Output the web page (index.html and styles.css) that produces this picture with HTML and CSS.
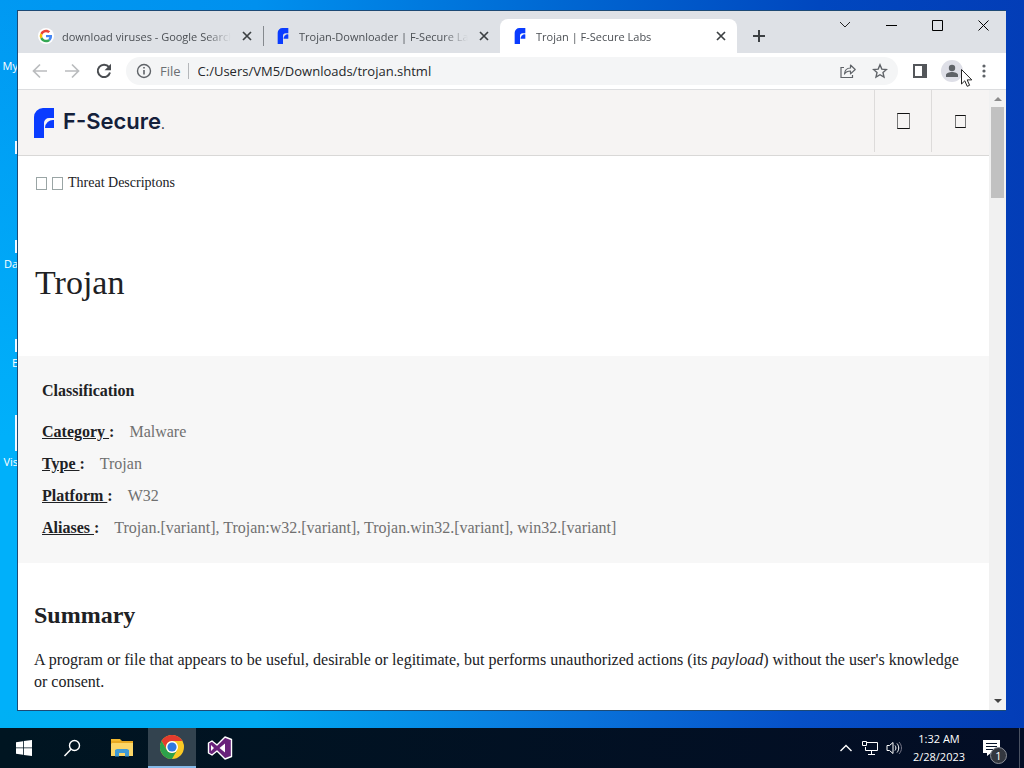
FILE: index.html
```html
<!DOCTYPE html>
<html lang="en">
<head>
  <meta charset="UTF-8">
  <meta name="viewport" content="width=device-width, initial-scale=1.0">
  <title>Trojan | F-Secure Labs</title>
  <link rel="stylesheet" href="styles.css">
</head>
<body>
<svg class="defs" aria-hidden="true">
  <symbol id="fsecure" viewBox="0 0 20 30">
    <path fill="#0a3cff" d="M9 0h11v10h-5a5 5 0 0 0-5 5v15H0V9a9 9 0 0 1 9-9z"/>
    <path fill="#0a3cff" d="M20 12v8h-9a8 8 0 0 1 9-8z"/>
  </symbol>
  <symbol id="close" viewBox="0 0 10 10">
    <path d="M1 1l8 8M9 1L1 9" fill="none" stroke="#3c4043" stroke-width="1.7"/>
  </symbol>
</svg>

<main class="desktop">
  <div class="shortcut my"><span>My</span></div>
  <div class="shortcut chrome"><i></i></div>
  <div class="shortcut data"><i></i><span>Da</span></div>
  <div class="shortcut exe"><i></i><span>E</span></div>
  <div class="shortcut visual"><i></i><span>Vis</span></div>

  <section class="window">
    <div class="tabstrip">
      <div class="tabs">
        <div class="tab">
          <svg class="favicon" viewBox="0 0 48 48">
            <circle cx="24" cy="24" r="24" fill="#fff"/>
            <g transform="translate(5 5) scale(.79)">
              <path fill="#ea4335" d="M24 9.500c3.500 0 6.700 1.200 9.200 3.600l6.900-6.900C35.900 2.400 30.500 0 24 0 14.600 0 6.500 5.400 2.600 13.200l8 6.200C12.400 13.700 17.700 9.500 24 9.500z"/>
              <path fill="#4285f4" d="M47 24.500c0-1.600-.2-3.100-.4-4.500H24v9h12.900c-.6 3-2.200 5.500-4.700 7.200l7.700 6C44.400 38 47 31.800 47 24.500z"/>
              <path fill="#fbbc05" d="M10.500 28.600a14.500 14.500 0 0 1 0-9.200l-8-6.200a24 24 0 0 0 0 21.600z"/>
              <path fill="#34a853" d="M24 48c6.500 0 11.900-2.100 15.900-5.800l-7.700-6c-2.200 1.500-4.900 2.300-8.200 2.300-6.300 0-11.600-4.200-13.500-9.900l-8 6.200C6.500 42.600 14.600 48 24 48z"/>
            </g>
          </svg>
          <span class="tab-title">download viruses - Google Search</span>
          <button class="tab-close" aria-label="Close tab"><svg><use href="#close"/></svg></button>
        </div>
        <div class="tab divided">
          <svg class="favicon"><use href="#fsecure"/></svg>
          <span class="tab-title">Trojan-Downloader | F-Secure Labs</span>
          <button class="tab-close" aria-label="Close tab"><svg><use href="#close"/></svg></button>
        </div>
        <div class="tab active">
          <svg class="favicon"><use href="#fsecure"/></svg>
          <span class="tab-title">Trojan | F-Secure Labs</span>
          <button class="tab-close" aria-label="Close tab"><svg><use href="#close"/></svg></button>
        </div>
        <button class="new-tab" aria-label="New tab">
          <svg width="12" height="12" viewBox="0 0 12 12"><path d="M6 0v12M0 6h12" stroke="#3c4043" stroke-width="2"/></svg>
        </button>
      </div>
      <div class="controls">
        <button aria-label="Search tabs"><svg width="12" height="12" viewBox="0 0 12 12"><path d="M1 3l5 5 5-5" fill="none" stroke="#222"/></svg></button>
        <button aria-label="Minimize"><svg width="11" height="11" viewBox="0 0 11 11"><path d="M0 5.500h11" stroke="#000"/></svg></button>
        <button aria-label="Maximize"><svg width="11" height="11" viewBox="0 0 11 11"><path d="M.5.5h10v10H.5z" fill="none" stroke="#000"/></svg></button>
        <button aria-label="Close"><svg width="11" height="11" viewBox="0 0 11 11"><path d="M.5.5l10 10M10.500.5l-10 10" stroke="#000"/></svg></button>
      </div>
    </div>

    <div class="toolbar">
      <button class="tool" aria-label="Back"><svg width="16" height="16" viewBox="0 0 16 16"><path d="M15 8H2M8 1.500L1.500 8 8 14.500" fill="none" stroke="#babcbe" stroke-width="1.7"/></svg></button>
      <button class="tool" aria-label="Forward"><svg width="16" height="16" viewBox="0 0 16 16"><path d="M1 8h13M8 1.500L14.500 8 8 14.500" fill="none" stroke="#babcbe" stroke-width="1.7"/></svg></button>
      <button class="tool" aria-label="Reload"><svg width="16" height="16" viewBox="0 0 16 16"><path d="M13 4.200A6.200 6.200 0 1 0 14 9.500" fill="none" stroke="#4a4d51" stroke-width="2"/><path d="M15 .8v6.400H8.600z" fill="#4a4d51"/></svg></button>
      <div class="omnibox">
        <svg width="16" height="16" viewBox="0 0 16 16"><circle cx="8" cy="8" r="6.500" fill="none" stroke="#5f6368" stroke-width="1.400"/><path d="M8 7v4.500M8 4v1.600" stroke="#5f6368" stroke-width="1.600"/></svg>
        <label for="url">File</label>
        <input id="url" type="text" value="C:/Users/VM5/Downloads/trojan.shtml">
        <button class="tool" aria-label="Share"><svg width="16" height="16" viewBox="0 0 16 16"><path d="M4 4.500H1v10h11.500V12" fill="none" stroke="#5f6368" stroke-width="1.200"/><path d="M4.500 11c.3-4 2.500-6 6-6V2l4.700 4.500-4.700 4.400V8c-2.800 0-4.600.8-6 3z" fill="none" stroke="#5f6368" stroke-width="1.200" stroke-linejoin="round"/></svg></button>
        <button class="tool" aria-label="Bookmark"><svg width="16" height="16" viewBox="0 0 16 16"><path d="M8 1.800l1.800 4.300 4.700.4L11 9.600l1 4.500-4-2.400-4 2.400 1-4.500-3.500-3.100 4.700-.4z" fill="none" stroke="#5f6368" stroke-width="1.400"/></svg></button>
      </div>
      <button class="tool" aria-label="Side panel"><svg width="14" height="14" viewBox="0 0 14 14"><path d="M1 1h12v12H1z" fill="#fff" stroke="#53565a" stroke-width="2"/><path d="M9 0h5v14H9z" fill="#53565a"/></svg></button>
      <button class="tool" aria-label="Profile"><svg width="22" height="22" viewBox="0 0 22 22"><circle cx="11" cy="11" r="11" fill="#dedfe7"/><circle cx="11" cy="8" r="3.200" fill="#5f6368"/><path d="M5 17v-2c0-2 3.500-3 6-3s6 1 6 3v2z" fill="#5f6368"/></svg></button>
      <button class="tool" aria-label="Menu"><svg width="4" height="14" viewBox="0 0 4 14" fill="#5f6368"><circle cx="2" cy="2" r="1.600"/><circle cx="2" cy="7" r="1.600"/><circle cx="2" cy="12" r="1.600"/></svg></button>
    </div>

    <div class="viewport">
      <div class="page">
        <header class="site-header">
          <a class="logo" href="#"><svg><use href="#fsecure"/></svg><span>F-Secure<small>.</small></span></a>
          <button aria-label="Search"><i class="glyph large"></i></button>
          <button aria-label="Navigation"><i class="glyph"></i></button>
        </header>
        <nav class="breadcrumb">
          <a href="#" aria-label="Home"><i class="glyph thin"></i></a>
          <i class="glyph thin"></i>
          <a href="#">Threat Descriptons</a>
        </nav>
        <h1>Trojan</h1>
        <section class="classification">
          <h2>Classification</h2>
          <p><strong><a href="#">Category </a>:</strong> <span>Malware</span></p>
          <p><strong><a href="#">Type </a>:</strong> <span>Trojan</span></p>
          <p><strong><a href="#">Platform </a>:</strong> <span>W32</span></p>
          <p><strong><a href="#">Aliases </a>:</strong> <span>Trojan.[variant], Trojan:w32.[variant], Trojan.win32.[variant], win32.[variant]</span></p>
        </section>
        <section class="summary">
          <h2>Summary</h2>
          <p>A program or file that appears to be useful, desirable or legitimate, but performs unauthorized actions (its <em>payload</em>) without the user's knowledge or consent.</p>
        </section>
      </div>
      <div class="scrollbar">
        <svg width="8" height="4" viewBox="0 0 8 4"><path d="M4 0l4 4H0z" fill="#8b8b8b"/></svg>
        <div class="thumb"></div>
        <svg width="8" height="4" viewBox="0 0 8 4"><path d="M0 0h8L4 4z" fill="#444"/></svg>
      </div>
    </div>
  </section>

  <svg class="cursor" width="14" height="20" viewBox="0 0 14 20"><path d="M1.500 1.500v14.500l3.300-3.200 2.400 5.500 2.400-1-2.400-5.400h4.600z" fill="#fff" stroke="#222"/></svg>
</main>

<footer class="taskbar">
  <button aria-label="Start"><svg width="16" height="16" viewBox="0 0 16 16" fill="#fff"><path d="M0 2.200L7 1.200v6.300H0zM7.800 1.100L16 0v7.500H7.800zM0 8.300h7v6.500l-7-1zM7.800 8.300H16V16l-8.200-1.100z"/></svg></button>
  <button aria-label="Search"><svg width="18" height="18" viewBox="0 0 18 18"><circle cx="11.500" cy="6.500" r="5" fill="none" stroke="#fff" stroke-width="1.400"/><path d="M8 10.300L1.500 17" stroke="#fff" stroke-width="1.500"/></svg></button>
  <button class="explorer" aria-label="File Explorer"><svg width="22" height="18" viewBox="0 0 22 18"><path d="M0 0h9l2 2h11v15H0z" fill="#e8a922"/><path d="M1 4h21v13H0V5z" fill="#fcd667"/><path d="M4 17.500V11l2-1h10l2 1v6.500h-4V14H8v3.500z" fill="#3f9ad6"/><path d="M0 0h9v2H0z" fill="#f4b92e"/></svg></button>
  <button class="running" aria-label="Google Chrome">
    <svg width="24" height="24" viewBox="0 0 24 24"><circle cx="12" cy="12" r="12" fill="#fbc924"/><path d="M1.600 6A12 12 0 0 1 22.400 6H12a6 6 0 0 0-5.200 9z" fill="#e33b2e"/><path d="M1.600 6A12 12 0 0 0 12 24l5.200-9A6 6 0 0 1 6.800 15z" fill="#2da14b"/><circle cx="12" cy="12" r="6" fill="#fff"/><circle cx="12" cy="12" r="4.600" fill="#2f78e0"/></svg>
  </button>
  <button class="studio" aria-label="Visual Studio"><svg width="26" height="24" viewBox="0 0 26 24"><path d="M18 1l6.500 2.500v17L18 23l-8-8-5 4-3.500-2V7L5 5l5 4z" fill="#68217a" stroke="#fff" stroke-width="1.400" stroke-linejoin="round"/><path d="M18 7.500v9L12.500 12zM4 9l3 3-3 3z" fill="#fff"/></svg></button>
  <div class="tray">
    <button aria-label="Show hidden icons"><svg width="12" height="8" viewBox="0 0 12 8"><path d="M.5 7L6 1.500 11.500 7" fill="none" stroke="#fff" stroke-width="1.400"/></svg></button>
    <button aria-label="Network"><svg width="16" height="14" viewBox="0 0 16 14" fill="none" stroke="#fff"><path d="M5 1.500h10.500v8h-12V6M9.500 9.500v3.500M6 13.500h7M.5.5h4v4h-4z"/></svg></button>
    <button aria-label="Volume"><svg width="16" height="14" viewBox="0 0 16 14" fill="none" stroke="#fff"><path d="M1 4.500h2.500L7 1.500v11l-3.500-3H1z"/><path d="M9 4.500c1.200 1.500 1.200 3.500 0 5M11 2.500c2.300 2.700 2.300 6.300 0 9"/><path d="M13 1c3.300 3.500 3.300 8.500 0 12" stroke="#778"/></svg></button>
    <time datetime="2023-02-28T01:32">1:32 AM<br>2/28/2023</time>
    <button class="notify" aria-label="Notifications"><svg width="17" height="16" viewBox="0 0 17 16"><path d="M0 0h17v13H8l-4 3v-3H0z" fill="#fff"/><path d="M3 3.500h11M3 6.500h11M3 9.500h7" stroke="#06142a"/></svg><span class="badge">1</span></button>
    <button class="peek" aria-label="Show desktop"></button>
  </div>
</footer>
</body>
</html>
```
FILE: styles.css
```css
* {
  box-sizing: border-box;
}

body {
  margin: 0;
  height: 100vh;
  display: flex;
  flex-direction: column;
  overflow: hidden;
  font-family: "Open Sans", "Noto Sans", sans-serif;
  font-size: 11px;
  color: #202124;
}

button {
  display: flex;
  align-items: center;
  justify-content: center;
  padding: 0;
  border: none;
  background: none;
  color: inherit;
  font: inherit;
}

a {
  color: inherit;
  text-decoration: none;
}

.defs {
  position: absolute;
  width: 0;
  height: 0;
}

/* desktop */
.desktop {
  flex: 1;
  min-height: 0;
  position: relative;
  overflow: hidden;
  background:
    linear-gradient(to right, #00b0f4 0%, #00aaf2 25%, #0a7ee0 50%, #0650c8 78%, #033db7 100%) bottom / 100% 18px no-repeat,
    linear-gradient(to bottom, rgba(0, 176, 255, 0) 0%, #00b0fa 60%) left / 20px 100% no-repeat,
    linear-gradient(to right, #0099f2 0%, #0090ee 25%, #0067d2 55%, #0047bf 80%, #033db7 100%);
}

.shortcut {
  position: absolute;
  left: 0;
  width: 18px;
  display: flex;
  flex-direction: column;
  align-items: flex-end;
  color: #fff;
  line-height: 16px;
  white-space: nowrap;
}

.shortcut i {
  width: 3px;
  height: 13px;
  margin-bottom: 3px;
  background: #f2f8ff;
}

.my { top: 58px; }
.chrome { top: 141px; }
.data { top: 240px; }
.exe { top: 339px; }
.visual { top: 415px; }

.visual i {
  height: 36px;
}

.window {
  position: absolute;
  inset: 10px 18px 17px 17px;
  display: flex;
  flex-direction: column;
  border: 1px solid #1d4a75;
  border-right: none;
  background: #fff;
}

.cursor {
  position: absolute;
  top: 68px;
  right: 50px;
}

/* tabs */
.tabstrip {
  display: flex;
  justify-content: space-between;
  height: 42px;
  background: #dee1e6;
}

.tabs {
  flex: 1;
  display: flex;
  align-items: flex-end;
  padding-left: 8px;
}

.tab {
  flex: 0 1 237px;
  min-width: 0;
  height: 34px;
  display: flex;
  align-items: center;
  gap: 8px;
  padding: 0 8px 0 12px;
  color: #4b4f54;
}

.tab.divided {
  background: linear-gradient(#85898e, #85898e) left / 1px 20px no-repeat;
}

.tab.active {
  background: #fff;
  border-radius: 8px 8px 0 0;
}

.favicon {
  width: 16px;
  height: 16px;
  flex: none;
}

.tab-title {
  flex: 1;
  overflow: hidden;
  white-space: nowrap;
  mask-image: linear-gradient(to right, #000 85%, transparent);
}

.tab-close {
  width: 16px;
  height: 16px;
}

.tab-close svg {
  width: 10px;
  height: 10px;
}

.new-tab {
  width: 28px;
  height: 34px;
  margin-left: 8px;
}

.controls {
  display: flex;
}

.controls button {
  width: 46px;
  height: 28px;
}

/* toolbar */
.toolbar {
  display: flex;
  align-items: center;
  height: 37px;
  padding: 0 6px;
  border-bottom: 1px solid #dcdddf;
}

.tool {
  width: 32px;
  height: 28px;
  flex: none;
}

.omnibox {
  flex: 1;
  display: flex;
  align-items: center;
  height: 28px;
  margin: 0 6px;
  padding: 0 2px 0 10px;
  border-radius: 14px;
  background: #f4f5f6;
  font-size: 13px;
}

.omnibox label {
  margin-left: 8px;
  padding-right: 7px;
  border-right: 1px solid #b5b7ba;
  line-height: 16px;
  color: #6b6f73;
}

.omnibox input {
  flex: 1;
  min-width: 0;
  padding: 0 9px;
  border: none;
  background: none;
  font: inherit;
  color: #25272a;
}

/* page */
.viewport {
  flex: 1;
  min-height: 0;
  display: flex;
}

.page {
  flex: 1;
  overflow: hidden;
  font-family: "Liberation Serif", serif;
  font-size: 16px;
  line-height: 22px;
}

.scrollbar {
  width: 17px;
  display: flex;
  flex-direction: column;
  align-items: center;
  padding: 7px 0;
  background: #f1f1f1;
}

.thumb {
  width: 13px;
  height: 91px;
  margin: 6px 0 auto;
  background: #c1c1c1;
}

.site-header {
  display: flex;
  height: 66px;
  padding-right: 1px;
  background: #f6f4f3;
  border-bottom: 1px solid #d9d8d7;
}

.site-header button {
  width: 57px;
  height: 62px;
  border-left: 1px solid #dddbda;
}

.logo {
  flex: 1;
  display: flex;
  align-items: center;
  gap: 9px;
  padding-left: 16px;
  font: 600 22px "Inter", sans-serif;
  color: #14203a;
}

.logo svg {
  width: 20px;
  height: 30px;
}

.logo span {
  padding-bottom: 4px;
}

.logo small {
  font-size: 12px;
}

.glyph {
  display: inline-block;
  width: 11px;
  height: 13px;
  border: 1px solid #555;
  border-color: #111 #777;
}

.glyph.large {
  width: 13px;
  height: 16px;
}

.glyph.thin {
  border-color: #9aa5a5;
}

.breadcrumb {
  display: flex;
  align-items: center;
  gap: 5px;
  padding: 16px 18px;
  font-size: 14px;
}

.breadcrumb a {
  display: flex;
}

h1 {
  margin: 51px 17px;
  font-size: 34px;
  line-height: 44px;
  font-weight: normal;
}

.classification {
  padding: 24px 24px 19px;
  background: #f7f7f7;
}

.classification h2 {
  margin: 0 0 14px;
  font-size: 16px;
}

.classification p {
  margin: 0;
  line-height: 32px;
}

.classification a {
  text-decoration: underline;
  white-space: pre;
}

.classification span {
  margin-left: 11px;
  color: #707070;
}

.summary {
  padding: 36px 16px;
}

.summary h2 {
  margin: 0 0 18px;
  font-size: 24px;
  line-height: 32px;
}

.summary p {
  margin: 0;
}

/* taskbar */
.taskbar {
  display: flex;
  height: 40px;
  background: linear-gradient(to right, #001521, #030d25);
  color: #fff;
}

.taskbar > button {
  width: 48px;
}

.taskbar .explorer {
  margin: 0 2px;
}

.taskbar .running {
  background: #33434f;
  border-bottom: 2px solid #85b9e8;
}

.tray {
  display: flex;
  margin-left: auto;
}

.tray button {
  width: 24px;
}

.tray time {
  width: 66px;
  padding-top: 2px;
  line-height: 18px;
  text-align: center;
}

.tray .notify {
  position: relative;
  width: 38px;
  margin-right: 9px;
}

.badge {
  position: absolute;
  right: 3px;
  bottom: 4px;
  width: 17px;
  height: 17px;
  border: 1px solid #8c9099;
  border-radius: 50%;
  background: #33373f;
  line-height: 15px;
  text-align: center;
}

.tray .peek {
  width: 5px;
  border-left: 1px solid #4a5262;
}
```
